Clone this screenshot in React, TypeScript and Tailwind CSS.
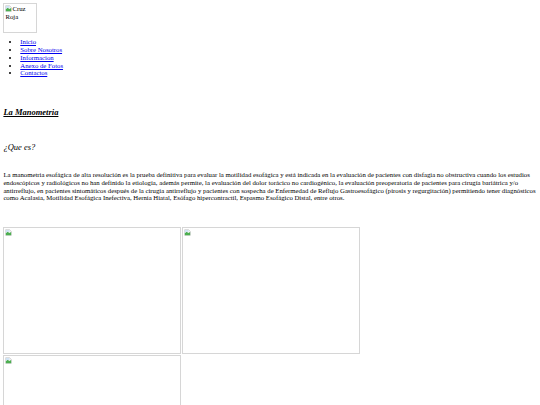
import React from "react";

function BrokenIcon() {
  return (
    <svg width="7" height="7" viewBox="0 0 16 16" className="inline-block shrink-0 align-top">
      <path d="M1.5 1.5h9l4 4v9h-13z" fill="#f4f4f4" stroke="#a9a9a9" strokeWidth="1" />
      <path d="M2 9l4-3 4 3 4-2v7H2z" fill="#4caf50" />
      <path d="M2 2h8v5l-4-1-4 3z" fill="#cfe3f5" />
    </svg>
  );
}

function Broken({ className, alt }: { className: string; alt?: string }) {
  return (
    <div className={`border border-[#d6d6d6] p-[1px] overflow-hidden ${className}`}>
      <div className="flex items-start">
        <BrokenIcon />
        {alt ? <span className="leading-[7.7px] text-[6.75px] text-black">{alt.split(" ")[0]}</span> : null}
      </div>
      {alt ? <div className="leading-[7.7px] text-[6.75px] text-black">{alt.split(" ")[1]}</div> : null}
    </div>
  );
}

const links = ["Inicio", "Sobre Nosotros", "Informacion", "Anexo de Fotos", "Contactos"];

export default function App() {
  return (
    <div className="bg-white min-h-[405px] p-[3.375px] text-black text-[6.75px] leading-[7.7px]" style={{ fontFamily: '"Liberation Serif", "Times New Roman", serif' }}>
      <Broken className="w-[34px] h-[30px]" alt="Cruz Roja" />
      <ul className="mt-[5px] pl-[16.9px] list-disc leading-[7.76px]">
        {links.map((l) => (
          <li key={l}>
            <a href="#" className="text-[#0000ee] underline">{l}</a>
          </li>
        ))}
      </ul>
      <h3 className="mt-[30.6px] text-[8.5px] leading-[9.8px] font-bold italic underline">La Manometria</h3>
      <h3 className="mt-[25.8px] text-[8.5px] leading-[9.8px] italic">¿Que es?</h3>
      <p className="mt-[18px] leading-[7.7px]">
        La manometria esofágica de alta resolución es la prueba definitiva para evaluar la motilidad esofágica y está indicada en la evaluación de pacientes con disfagia no obstructiva cuando los estudios endoscópicos y radiológicos no han definido la etiología, además permite, la evaluación del dolor torácico no cardiogénico, la evaluación preoperatoria de pacientes para cirugía bariátrica y/o antirreflujo, en pacientes sintomáticos después de la cirugía antirreflujo y pacientes con sospecha de Enfermedad de Reflujo Gastroesofágico (pirosis y regurgitación) permitiendo tener diagnósticos como Acalasia, Motilidad Esofágica Inefectiva, Hernia Hiatal, Esófago hipercontractil, Espasmo Esofágico Distal, entre otros.
      </p>
      <div className="mt-[24.5px] w-[360px] flex flex-wrap gap-x-[1px] gap-y-[1px]">
        <Broken className="w-[178px] h-[127px]" />
        <Broken className="w-[178px] h-[127px]" />
        <Broken className="w-[178px] h-[127px]" />
      </div>
    </div>
  );
}
